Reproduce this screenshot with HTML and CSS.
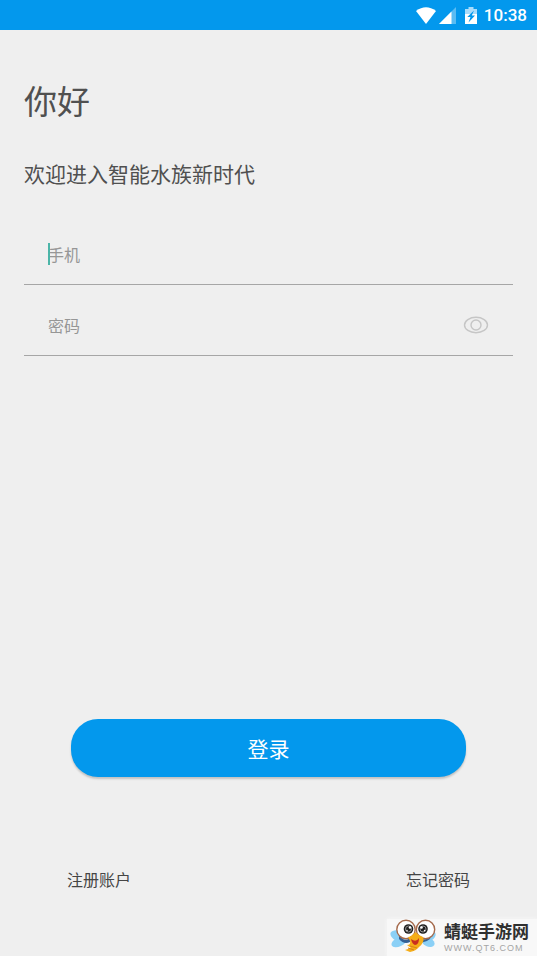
FILE: index.html
```html
<!DOCTYPE html>
<html lang="zh-CN">
<head>
<meta charset="utf-8">
<meta name="viewport" content="width=device-width, initial-scale=1">
<title>登录</title>
<link rel="stylesheet" href="styles.css">
</head>
<body>
<div class="screen">
  <header class="status-bar">
    <svg class="wifi" viewBox="0 0 20 17" aria-hidden="true"><path fill="#fff" d="M0 4Q10-3.500 20 4L10 17Z"/></svg>
    <svg class="signal" viewBox="0 0 17 17" aria-hidden="true"><path fill="#fff" opacity=".35" d="M17 0V17H0Z"/><path fill="#fff" d="M12.500 4.500V17H0Z"/></svg>
    <svg class="battery" viewBox="0 0 12 17" aria-hidden="true"><path fill="#a9dcfb" d="M0 2H3.500V0H8.500V2H12V8H0Z"/><path fill="#fff" d="M0 7H12V17H0Z"/><path fill="#0398ed" d="M9 3.500L2.300 10H5.500L3.500 15.500L10 8.500H6.800Z"/></svg>
    <time class="clock">10:38</time>
  </header>
  <main class="content">
    <h1 class="greeting">你好</h1>
    <p class="welcome">欢迎进入智能水族新时代</p>
    <form class="login-form">
      <div class="field">
        <input class="field-input" type="tel" placeholder="手机" aria-label="手机">
        <span class="caret"></span>
      </div>
      <div class="field">
        <input class="field-input" type="password" placeholder="密码" aria-label="密码">
        <button class="reveal" type="button" aria-label="显示密码">
          <svg class="eye" viewBox="0 0 26 18" fill="none" stroke="#c6c6c6" stroke-width="1.400" aria-hidden="true"><ellipse cx="13" cy="9" rx="11.500" ry="7.700"/><circle cx="13" cy="9" r="5"/></svg>
        </button>
      </div>
      <button class="submit" type="submit">登录</button>
    </form>
    <nav class="links">
      <a class="link" href="#register">注册账户</a>
      <a class="link" href="#forgot">忘记密码</a>
    </nav>
  </main>
  <aside class="watermark">
    <svg class="mascot" viewBox="0 0 48 34" aria-hidden="true">
      <g fill="#8bd0f6"><ellipse cx="8" cy="17" rx="8" ry="5" transform="rotate(25 8 17)"/><ellipse cx="9" cy="23" rx="8" ry="4.500" transform="rotate(-25 9 23)"/><ellipse cx="39" cy="17" rx="7" ry="5" transform="rotate(-25 39 17)"/><ellipse cx="38" cy="23" rx="7" ry="4.500" transform="rotate(25 38 23)"/></g>
      <path fill="#335f94" d="M9 16Q15 25 21 18L20 23Q14 26 9 20ZM29 18Q35 24 41 16L40 20Q34 25 29 22Z"/>
      <g fill="#fff" stroke="#a56a4c" stroke-width="1.400"><circle cx="16" cy="10.500" r="9.200"/><circle cx="35.500" cy="10.500" r="9.200"/></g>
      <path fill="#f5ad18" d="M18 18Q21 18 25.500 13Q29 17 33 18Q35 23 29 28Q26 32 20 33L15 31L21 29L17 26Q21 26 20 22Z"/>
      <path fill="none" stroke="#d9821a" d="M18 29L24 31M20 27L27 29"/>
      <path fill="#c92e20" d="M21 20Q26 24 29 19Q29 26 25 26Q22 25 21 20Z"/>
      <circle cx="18.500" cy="10" r="4.800" fill="#202020"/><circle cx="33" cy="10" r="4.800" fill="#202020"/>
      <g fill="none" stroke="#929292"><circle cx="18.500" cy="10" r="3"/><circle cx="33" cy="10" r="3"/></g>
      <g fill="#fff"><circle cx="20" cy="8.500" r="1.300"/><circle cx="31.500" cy="8.500" r="1.300"/><circle cx="17" cy="11.500" r=".7"/><circle cx="34.500" cy="11.500" r=".7"/></g>
    </svg>
    <div class="brand">
      <strong class="brand-name">蜻蜓手游网</strong>
      <span class="brand-url">WWW.QT6.COM</span>
    </div>
  </aside>
</div>
</body>
</html>
```
FILE: styles.css
```css
* {
  box-sizing: border-box;
}

body {
  margin: 0;
  background: #efefef;
  color: #505050;
  font-family: "Noto Sans CJK SC", sans-serif;
}

button,
input {
  font-family: inherit;
}

.screen {
  position: relative;
  display: flex;
  flex-direction: column;
  min-height: 100vh;
}

.status-bar {
  display: flex;
  align-items: center;
  justify-content: flex-end;
  height: 30px;
  padding-right: 10px;
  background: #0398ed;
  color: #fff;
}

.wifi {
  width: 20px;
  height: 17px;
  margin-right: 3px;
}

.signal {
  width: 17px;
  height: 17px;
  margin-right: 9px;
}

.battery {
  width: 12px;
  height: 17px;
  margin-right: 7px;
}

.clock {
  font: 500 17px/20px Roboto, sans-serif;
}

.content {
  display: flex;
  flex: 1;
  flex-direction: column;
  padding: 46px 24px 65px;
}

.greeting {
  margin: 0 0 33px;
  font-size: 33px;
  font-weight: 400;
  line-height: 48px;
}

.welcome {
  margin: 0 0 24px;
  font-size: 21px;
  line-height: 32px;
}

.login-form {
  display: flex;
  flex: 1;
  flex-direction: column;
}

.field {
  position: relative;
  display: flex;
  align-items: center;
  height: 71px;
  padding: 12px 24px 2px;
  border-bottom: 1px solid #a6a6a6;
}

.field:first-child {
  height: 72px;
}

.field-input {
  flex: 1;
  min-width: 0;
  padding: 0;
  border: 0;
  outline: 0;
  background: transparent;
  color: #505050;
  font-size: 16px;
  line-height: 24px;
}

.field-input::placeholder {
  color: #969696;
  opacity: 1;
}

.caret {
  position: absolute;
  top: 30px;
  left: 24px;
  width: 2px;
  height: 22px;
  background: #4bb5a8;
}

.reveal {
  display: flex;
  padding: 0;
  border: 0;
  background: transparent;
}

.eye {
  width: 26px;
  height: 18px;
}

.submit {
  height: 58px;
  margin: auto 47px 0;
  border: 0;
  border-radius: 27px;
  background: #0398ed;
  box-shadow: 0 2px 2px #c2c2c2;
  color: #fff;
  font-size: 21px;
}

.links {
  display: flex;
  justify-content: space-between;
  margin-top: 90px;
  padding: 0 43px;
}

.link {
  color: #454545;
  font-size: 16px;
  line-height: 24px;
  text-decoration: none;
}

.watermark {
  position: absolute;
  right: 0;
  bottom: 0;
  display: flex;
  align-items: center;
  gap: 6px;
  padding: 0 8px 3px 3px;
  background: #f8f8f8;
  box-shadow: 0 0 4px #f8f8f8;
}

.mascot {
  width: 48px;
  height: 34px;
}

.brand {
  display: flex;
  flex-direction: column;
}

.brand-name {
  color: #303030;
  font-size: 17px;
  line-height: 24px;
}

.brand-url {
  color: #a5a5a5;
  font: 9px/10px "Liberation Sans", sans-serif;
  letter-spacing: 1px;
}
```
